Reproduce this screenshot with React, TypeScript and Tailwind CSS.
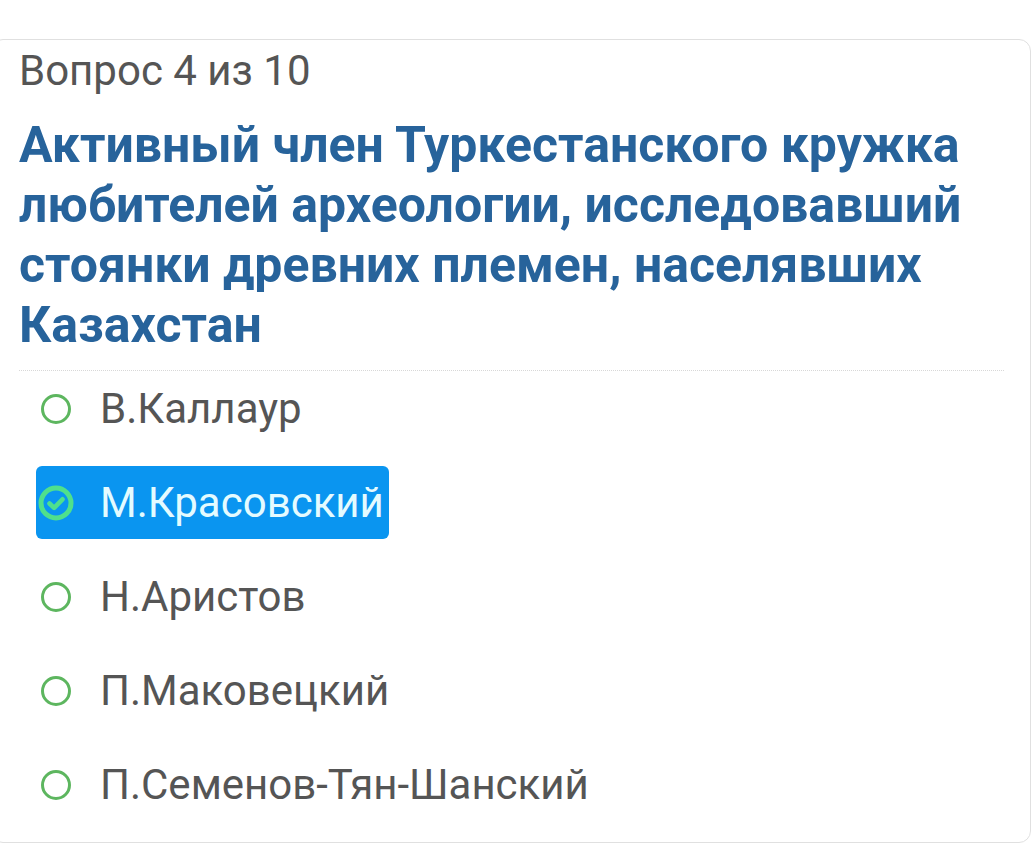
import { useState } from "react";

const options = [
    "В.Каллаур",
    "М.Красовский",
    "Н.Аристов",
    "П.Маковецкий",
    "П.Семенов-Тян-Шанский",
];

function RadioIcon({ checked }: { checked: boolean }) {
    if (checked) {
        return (
            <svg width="36" height="36" viewBox="0 0 36 36" className="mx-[-3px] shrink-0">
                <circle cx="18" cy="18" r="15" fill="none" stroke="#4fe08c" strokeWidth="5" />
                <path
                    d="M11.5 18.5l4.6 4.4 8.4-8.6"
                    fill="none"
                    stroke="#4fe08c"
                    strokeWidth="4.6"
                    strokeLinecap="round"
                    strokeLinejoin="round"
                />
            </svg>
        );
    }
    return (
        <svg width="30" height="30" viewBox="0 0 30 30" className="shrink-0">
            <circle cx="15" cy="15" r="13.5" fill="none" stroke="#5db65f" strokeWidth="3" />
        </svg>
    );
}

export default function App() {
    const [selected, setSelected] = useState(1);

    return (
        <div className="min-h-[860px] bg-white pt-[39px] font-['Roboto',sans-serif]">
            <div className="ml-[-9px] w-[1040px] rounded-xl border border-[#e0e0e0] pb-[21px] pl-[27px] pr-[24px] pt-[5px]">
                <div className="text-[42px] leading-[52px] text-[#555555]">Вопрос 4 из 10</div>
                <h2 className="mt-[18px] pb-[15px] text-[50px] font-bold leading-[60px] text-[#27639b]">
                    Активный член Туркестанского кружка любителей археологии, исследовавший стоянки древних
                    племен, населявших Казахстан
                </h2>
                <div className="mr-[2px] border-b border-dotted border-[#d8d8d8]" />
                <ul className="mt-px flex flex-col gap-[21px] pl-[17px]">
                    {options.map((text, i) => (
                        <li key={text}>
                            <button
                                onClick={() => setSelected(i)}
                                className={
                                    i === selected
                                        ? "flex h-[73px] items-center gap-[29px] rounded-md bg-[#0a95f0] pl-[5px] pr-[5px] text-[42px] text-[#e4fbff]"
                                        : "flex h-[73px] items-center gap-[29px] rounded-md pl-[5px] pr-[5px] text-[42px] text-[#555555]"
                                }
                            >
                                <RadioIcon checked={i === selected} />
                                <span>{text}</span>
                            </button>
                        </li>
                    ))}
                </ul>
            </div>
        </div>
    );
}
